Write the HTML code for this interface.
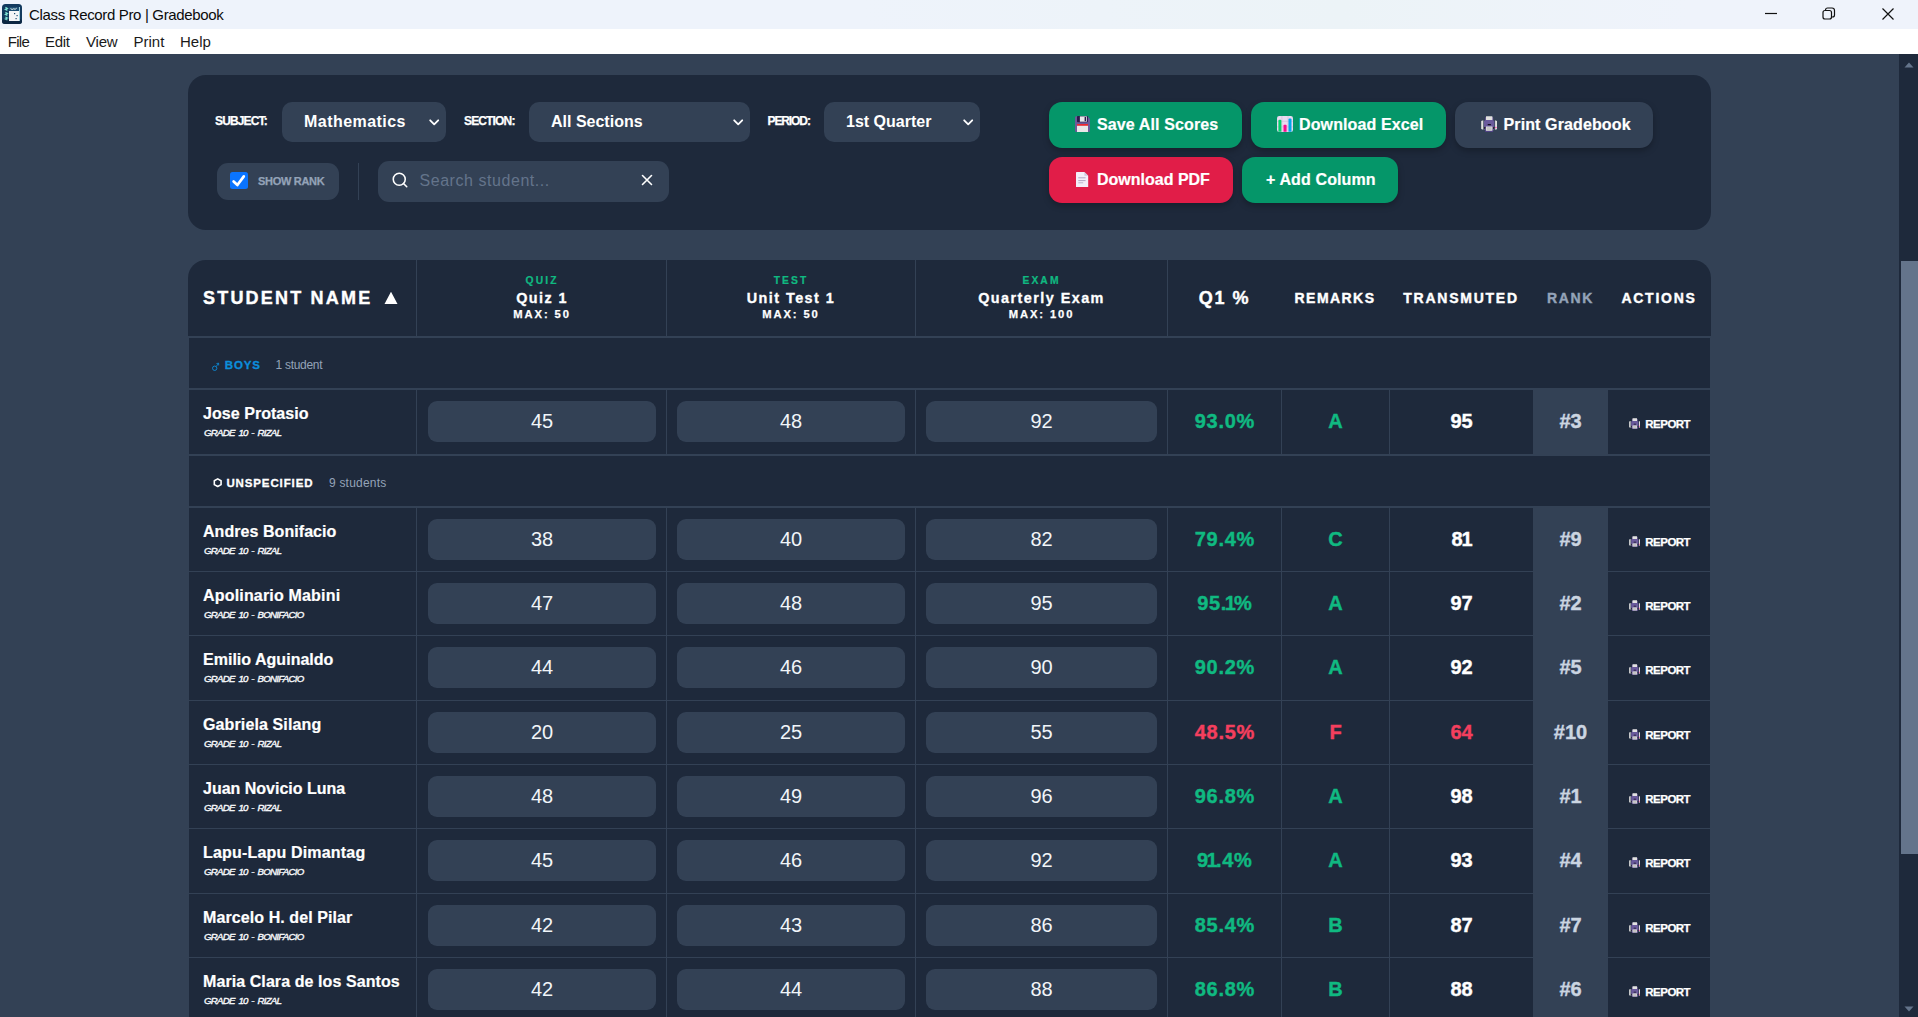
<!DOCTYPE html>
<html lang="en">
<head>
<meta charset="utf-8">
<title>Class Record Pro | Gradebook</title>
<style>
*{box-sizing:border-box;margin:0;padding:0}
html,body{width:1918px;height:1017px;overflow:hidden;background:#334155;font-family:"Liberation Sans",sans-serif;color:#fff}
b{font-weight:bold}i{font-style:normal}
#titlebar{position:absolute;left:0;top:0;width:1918px;height:29px;background:linear-gradient(90deg,#eef3fb 0%,#eef3fb 45%,#ecf3f7 70%,#eff3fb 88%,#eff3fb 100%)}
#titlebar .ttl{position:absolute;left:29px;top:5.5px;font-size:15px;line-height:18px;color:#0b0b0b;white-space:nowrap;letter-spacing:-.34px}
#titlebar svg{position:absolute}
#menubar{position:absolute;left:0;top:29px;width:1918px;height:25px;background:#fff}
#menubar span{position:absolute;top:4px;font-size:15px;line-height:18px;color:#1a1a1a;white-space:nowrap}
#sbar{position:absolute;left:1899px;top:54px;width:19px;height:963px;background:#1e293b}
#sbar .thumb{position:absolute;left:2px;top:207px;width:17px;height:593px;background:#64748b}
#sbar svg{position:absolute;left:5px}
#toolbar{position:absolute;background:#1e293b;left:188px;top:75px;width:1523px;height:155px;border-radius:18px}
.lbl{position:absolute;top:39px;font-weight:bold;font-size:12px;line-height:14px;color:#fff;white-space:nowrap;letter-spacing:-.85px;-webkit-text-stroke:.25px}
.sel{position:absolute;height:40px;top:27px;background:#334155;border-radius:10px}
.sel b{position:absolute;left:22px;top:11px;font-size:16px;white-space:nowrap;line-height:18px}
.sel svg{position:absolute;right:6.500px;top:17px}
.chk{position:absolute;left:29px;top:88px;width:122px;height:37px;border-radius:11px;background:#334155}
.chk .box{position:absolute;left:13.3px;top:9px;width:17.5px;height:17px;border-radius:2.5px;background:#0a74ff}
.chk .box svg{position:absolute;left:0;top:0}
.chk b{position:absolute;left:41px;top:12px;font-size:11px;line-height:13px;color:#94a3b8;letter-spacing:-.3px;white-space:nowrap;-webkit-text-stroke:.25px}
.vdiv{position:absolute;left:170px;top:88px;width:1px;height:37px;background:#334155}
.search{position:absolute;left:190px;top:86px;width:291px;height:41px;border-radius:11px;background:#334155}
.search svg{position:absolute}
.search span{position:absolute;left:41.5px;top:10px;font-size:16px;line-height:20px;color:#64748b;white-space:nowrap;letter-spacing:.55px}
.btn{position:absolute;height:46px;border-radius:13px;box-shadow:0 3px 6px rgba(0,0,0,.25);white-space:nowrap}
.btn b{position:absolute;top:14px;font-size:16px;line-height:18px;letter-spacing:.12px;-webkit-text-stroke:.2px}
.btn svg{position:absolute}
.g{background:#059669}.r{background:#e11d48}.s{background:#334155}
#table{position:absolute;background:#1e293b;left:188px;top:260px;width:1523px;height:780px;border-radius:18px 18px 0 0;overflow:hidden}
.th{position:absolute;top:0;height:76px;text-align:center;white-space:nowrap;font-weight:bold;-webkit-text-stroke:.4px}
.th.v{border-left:1px solid #334155}
.hline{position:absolute;left:0;top:76px;width:1523px;height:2px;background:#334155}
.th .a{position:absolute;left:0;width:100%;top:14.6px;font-size:10.3px;line-height:12px;letter-spacing:2.1px;color:#10b981;-webkit-text-stroke:.22px}
.th .b{position:absolute;left:0;width:100%;top:30.2px;font-size:14.4px;line-height:16px;letter-spacing:1.45px;-webkit-text-stroke:.32px}
.th .m{position:absolute;left:0;width:100%;top:48.3px;font-size:11.2px;line-height:13px;letter-spacing:1.9px;-webkit-text-stroke:.25px}
.th .s1{position:absolute;left:0;width:100%;top:29px;font-size:14px;line-height:18px;letter-spacing:1.6px}
.grp{position:absolute;left:0;width:1523px;height:52px;border-left:1px solid #334155;border-right:1px solid #334155;border-bottom:2px solid #334155}
.grp svg{position:absolute}
.grp b{position:absolute;left:35.8px;top:20px;font-size:11.5px;line-height:14px;letter-spacing:.85px;white-space:nowrap;-webkit-text-stroke:.3px}
.grp i{position:absolute;top:19.5px;font-size:12px;line-height:15px;color:#94a3b8;white-space:nowrap}
.grp.boys b{color:#0c8ddb}
.row{position:absolute;left:0;width:1523px;border-left:1px solid #334155;border-right:1px solid #334155;border-bottom:1px solid #334155}
.c{position:absolute;top:0;bottom:0;border-left:1px solid #334155;text-align:center}
.c.nm{left:0;width:227px;border-left:0;text-align:left}
.c.nm b{position:absolute;left:14px;top:14.8px;font-size:16px;line-height:18px;white-space:nowrap;-webkit-text-stroke:.2px}
.c.nm i{position:absolute;left:15px;top:37px;font-size:9.7px;line-height:11px;font-style:italic;font-weight:normal;white-space:nowrap;color:#f8fafc;letter-spacing:-.72px;word-spacing:1.6px;-webkit-text-stroke:.38px}
.c.q{left:227px;width:250px}.c.u{left:477px;width:249px}.c.e{left:726px;width:252px}
.c.u .inp,.c.e .inp{left:10px}
.inp{position:absolute;left:11px;right:10px;top:11px;height:41px;border-radius:9px;background:#334155;font-size:20px;line-height:41px;color:#f1f5f9}
.c.p{left:978px;width:114px}.c.rm{left:1092px;width:108px}.c.tr{left:1200px;width:144px}
.c.rk{left:1344px;width:75px;background:#334155;border-left:0}.c.ac{left:1419px;width:102px;border-left:0}
.c.p b,.c.rm b,.c.tr b,.c.rk b{position:absolute;left:0;width:100%;top:19.7px;font-size:20px;line-height:22px;-webkit-text-stroke:.4px}
.c.p u{text-decoration:none;margin:0 -2.4px}.c.tr u{text-decoration:none;margin:0 -1px}
.c.p b{letter-spacing:.7px;text-indent:.7px}
.c.p b,.c.rm b{color:#10b981}
.c.rk b{color:#cbd5e1}
.c.bad b{color:#f43f5e}
.c.ac svg{position:absolute;left:20.800px;top:27.800px}
.c.ac b{position:absolute;left:37.3px;top:26.8px;font-size:11.5px;line-height:14px;letter-spacing:-.52px;-webkit-text-stroke:.25px}
.grp.unsp b{left:37.4px;letter-spacing:.88px}
</style>
</head>
<body>
<div id="titlebar">
  <svg style="left:2px;top:4px" width="20" height="20" viewBox="0 0 20 20"><rect x="0" y="0" width="20" height="20" rx="3.5" fill="#123a5e"/><rect x="0" y="15" width="20" height="5" rx="3" fill="#0c2743"/><rect x="7" y="3" width="10" height="14" fill="#f4f6f7"/><rect x="7" y="3" width="10" height="4" fill="#1d4f73"/><path d="M8.5 4.6 q1.6 1.6 3.2 0.2 q1.4 1.2 3 -0.6" stroke="#e8f6f4" stroke-width="1" fill="none"/><path d="M3.4 3.4 l2 1 l-2 1 l2 1 M3.4 8.4 l2 1 l-2 1 l2 1 M3.4 13 l2 1 l-2 1 l2 1" stroke="#7fe3d4" stroke-width="1.2" fill="none"/><rect x="12" y="9" width="1.2" height="1.2" fill="#1d4f73"/><rect x="14.5" y="11" width="1.2" height="1.2" fill="#1d4f73"/><rect x="13.5" y="14" width="1.2" height="1.2" fill="#1d4f73"/><rect x="17" y="3" width="1" height="14" fill="#9fd3e0"/></svg>
  <span class="ttl">Class Record Pro | Gradebook</span>
  <svg style="left:1760px;top:0" width="150" height="29" viewBox="0 0 150 29" fill="none" stroke="#111" stroke-width="1.2"><path d="M5 13.5 H17"/><rect x="63" y="10.5" width="8.5" height="8.5" rx="2"/><path d="M65.5 10.5 V10 a2 2 0 0 1 2 -2 H72 a2.5 2.5 0 0 1 2.500 2.500 V15 a2 2 0 0 1 -2 2 H71.500"/><path d="M122.500 8.500 L133.500 19.500 M133.500 8.500 L122.500 19.500"/></svg>
</div>
<div id="menubar">
  <span style="left:7.7px;letter-spacing:-.7px">File</span><span style="left:45px;letter-spacing:-.3px">Edit</span><span style="left:86px;letter-spacing:-.2px">View</span><span style="left:133.5px">Print</span><span style="left:180px">Help</span>
</div>
<div id="sbar"><div class="thumb"></div>
  <svg style="top:8.300px;left:5.300px" width="10" height="6" viewBox="0 0 10 6"><path d="M0.500 5.500 L5 0.500 L9.500 5.500 Z" fill="#64748b"/></svg>
  <svg style="top:952px" width="10" height="6" viewBox="0 0 10 6"><path d="M0.500 0.500 L5 5.500 L9.500 0.500 Z" fill="#64748b"/></svg>
</div>

<div id="toolbar">
  <span class="lbl" style="left:27px">SUBJECT:</span>
  <div class="sel" style="left:94px;width:164px"><b style="letter-spacing:.45px">Mathematics</b><svg width="10.400" height="6.600" viewBox="0 0 10.400 6.600"><path d="M1.200 1.300 L5.200 5.300 L9.200 1.300" fill="none" stroke="#fff" stroke-width="1.800" stroke-linecap="round" stroke-linejoin="round"/></svg></div>
  <span class="lbl" style="left:276px">SECTION:</span>
  <div class="sel" style="left:341px;width:221px"><b>All Sections</b><svg width="10.400" height="6.600" viewBox="0 0 10.400 6.600"><path d="M1.200 1.300 L5.200 5.300 L9.200 1.300" fill="none" stroke="#fff" stroke-width="1.800" stroke-linecap="round" stroke-linejoin="round"/></svg></div>
  <span class="lbl" style="left:579.500px;letter-spacing:-1.100px">PERIOD:</span>
  <div class="sel" style="left:636px;width:156px"><b>1st Quarter</b><svg width="10.400" height="6.600" viewBox="0 0 10.400 6.600"><path d="M1.200 1.300 L5.200 5.300 L9.200 1.300" fill="none" stroke="#fff" stroke-width="1.800" stroke-linecap="round" stroke-linejoin="round"/></svg></div>

  <div class="chk"><span class="box"><svg width="18" height="18" viewBox="0 0 18 18"><path d="M3.6 9.4 L7.4 13 L13.8 4.400" fill="none" stroke="#fff" stroke-width="2.700" stroke-linecap="round" stroke-linejoin="round"/></svg></span><b>SHOW RANK</b></div>
  <div class="vdiv"></div>
  <div class="search">
    <svg style="left:13.25px;top:10.25px" width="18" height="18" viewBox="0 0 24 24" fill="none" stroke="#fff" stroke-width="2.1" stroke-linecap="round"><circle cx="11" cy="11" r="8"/><path d="M21 21 L16.65 16.65"/></svg>
    <span>Search student...</span>
    <svg style="left:263px;top:13.200px" width="12" height="12" viewBox="0 0 12 12" fill="none" stroke="#fff" stroke-width="1.600" stroke-linecap="round"><path d="M1.500 1.500 L10.500 10.500 M10.500 1.500 L1.500 10.500"/></svg>
  </div>

  <div class="btn g" style="left:861px;top:27px;width:193px">
    <svg style="left:26px;top:14.2px" width="15" height="16" viewBox="0 0 15 16"><path d="M0 1.500 Q0 0.300 1.200 0.300 L12.600 0.300 L15 2.700 L15 14.800 Q15 16 13.800 16 L1.200 16 Q0 16 0 14.800 Z" fill="#6b5b9a"/><rect x="2" y="0" width="10.900" height="6.300" rx=".8" fill="#2b1a4a"/><rect x="4.900" y=".4" width="7" height="5.300" fill="#e8e8ea"/><rect x="9.600" y="1" width="1.500" height="4.200" fill="#2b1a4a"/><rect x="2" y="8" width="11" height="1.900" fill="#f0262d"/><rect x="2" y="9.800" width="11" height="6.200" fill="#e8e8e8"/></svg>
    <b style="left:48px">Save All Scores</b></div>
  <div class="btn g" style="left:1063px;top:27px;width:195px">
    <svg style="left:25.500px;top:14.300px" width="16" height="16" viewBox="0 0 16 16"><rect x="0" y="0" width="16" height="16" rx="2.200" fill="#e8daf0"/><path d="M0 5.300 H16 M0 10.900 H16 M4.900 0 V16 M11 0 V16" stroke="#c9b8d6" stroke-width="0.600"/><path d="M1.400 15.700 V4.800 a1 1 0 0 1 1 -1 h1 a1 1 0 0 1 1 1 V15.700 Z" fill="#00d26a"/><path d="M6.500 15.700 V9.500 a.8 .8 0 0 1 .8 -.8 h1.500 a.8 .8 0 0 1 .8 .8 V15.700 Z" fill="#f70a8d"/><path d="M11.500 15.700 V3.400 a1 1 0 0 1 1 -1 h1 a1 1 0 0 1 1 1 V15.700 Z" fill="#00a6ed"/></svg>
    <b style="left:48px">Download Excel</b></div>
  <div class="btn s" style="left:1267px;top:27px;width:198px">
    <span style="position:absolute;left:25.800px;top:14px;width:16.400px;height:16px"><svg class="prn" viewBox="0 0 16.4 16" width="16.4" height="16"><rect x="4.2" y="1" width="8" height="14.7" rx="1" fill="#6a5a9c"/><rect x="3" y="4.4" width="10.4" height="9.4" rx=".6" fill="#6a5a9c"/><rect x="4.4" y="13.7" width="7.6" height="2" fill="#4d3c85"/><rect x="5" y="0.2" width="6.4" height="3.9" rx=".4" fill="#e2e2e0"/><path d="M0.200 5 L2.300 4.300 L2.300 13.800 L0.200 13.100 Z M16.200 5 L14.100 4.300 L14.100 13.800 L16.200 13.100 Z" fill="#e0e0de"/><rect x="6.6" y="8" width="3.4" height="1.3" rx=".6" fill="#15101f"/><rect x="5" y="10.5" width="6.400" height="4.300" fill="#dcdcda"/><rect x="5.800" y="11.100" width="4.800" height="3.300" fill="#c4c4c4"/><rect x="3.300" y="10.800" width=".9" height="2.300" rx=".45" fill="#111"/><rect x="12.200" y="10.800" width=".9" height="2.300" rx=".45" fill="#111"/><circle cx="14.900" cy="11.500" r=".75" fill="#ff3fa4"/></svg></span>
    <b style="left:48.500px">Print Gradebook</b></div>
  <div class="btn r" style="left:861px;top:82px;width:184px">
    <svg style="left:27.400px;top:14.800px" width="12.200" height="15.400" viewBox="0 0 12.200 15.400"><path d="M0.600 0 H8.400 L12.200 3.800 V14.800 Q12.200 15.400 11.600 15.400 H0.600 Q0 15.400 0 14.800 V0.600 Q0 0 0.600 0 Z" fill="#f3eef8"/><path d="M8.400 0 V3.200 Q8.400 3.800 9 3.800 H12.200 Z" fill="#cfc6dc"/><path d="M2.300 5.800 H9.600 M2.300 8.600 H9.600" stroke="#b0a6c2" stroke-width="1"/><path d="M2.300 10.800 H7.200" stroke="#b0a6c2" stroke-width=".8"/></svg>
    <b style="left:48px;letter-spacing:0">Download PDF</b></div>
  <div class="btn g" style="left:1054px;top:82px;width:156px"><b style="left:24px">+ Add Column</b></div>
</div>
<div id="table">
<div class="th" style="left:0;width:228px;text-align:left"><span style="position:absolute;left:15px;top:27px;font-size:18px;line-height:22px;letter-spacing:2.2px">STUDENT NAME</span><svg style="position:absolute;left:196px;top:31px" width="14" height="14" viewBox="0 0 14 14"><path d="M0.500 13 L7 0.800 L13.500 13 Z" fill="#fff"/></svg></div>
<div class="th v" style="left:228px;width:250px;text-indent:1.200px"><span class="a">QUIZ</span><span class="b">Quiz 1</span><span class="m">MAX: 50</span></div>
<div class="th v" style="left:478px;width:249px"><span class="a">TEST</span><span class="b">Unit Test 1</span><span class="m">MAX: 50</span></div>
<div class="th v" style="left:727px;width:252px"><span class="a">EXAM</span><span class="b">Quarterly Exam</span><span class="m">MAX: 100</span></div>
<div class="th v" style="left:979px;width:114px"><span class="s1" style="font-size:18px;top:27px;line-height:22px">Q1 %</span></div>
<div class="th" style="left:1093px;width:108px"><span class="s1" style="letter-spacing:1.450px">REMARKS</span></div>
<div class="th" style="left:1201px;width:144px"><span class="s1" style="letter-spacing:1.750px">TRANSMUTED</span></div>
<div class="th" style="left:1345px;width:75px"><span class="s1" style="color:#94a3b8">RANK</span></div>
<div class="th" style="left:1420px;width:102px"><span class="s1" style="letter-spacing:1.750px">ACTIONS</span></div>
<div class="hline"></div>
<div class="grp boys" style="top:78px"><svg class="gi" viewBox="0 0 10 12" width="7.5" height="9.5" style="left:23.3px;top:24px"><circle cx="3.6" cy="8" r="2.9" fill="none" stroke="#0c8ddb" stroke-width="1.2"/><path d="M5.5 5.8 L8.6 1.6 M5.9 1.8 L8.8 1.2 L8.9 4.2" fill="none" stroke="#0c8ddb" stroke-width="1.1"/></svg><b>BOYS</b><i style="left:86.6px;letter-spacing:-0.3px">1 student</i></div>
<div class="grp unsp" style="top:196px"><svg class="gi" viewBox="0 0 10 10" width="9.4" height="9.4" style="left:23.6px;top:22.4px"><path d="M5 0.9 L8.6 2.9 L8.6 7.1 L5 9.1 L1.4 7.1 L1.4 2.9 Z" fill="none" stroke="#fff" stroke-width="1.7" stroke-linejoin="round"/></svg><b>UNSPECIFIED</b><i style="left:140px;letter-spacing:0.2px">9 students</i></div>
<div class="row" style="top:130px;height:66px;border-bottom-width:2px"><div class="c nm"><b style="letter-spacing:0.05px">Jose Protasio</b><i>GRADE 10 - RIZAL</i></div><div class="c q"><span class="inp">45</span></div><div class="c u"><span class="inp">48</span></div><div class="c e"><span class="inp">92</span></div><div class="c p"><b>93.0%</b></div><div class="c rm"><b>A</b></div><div class="c tr"><b>95</b></div><div class="c rk"><b>#3</b></div><div class="c ac"><svg class="prn" viewBox="0 0 16.4 16" width="11.6" height="11.4"><rect x="4.2" y="1" width="8" height="14.7" rx="1" fill="#6a5a9c"/><rect x="3" y="4.4" width="10.4" height="9.4" rx=".6" fill="#6a5a9c"/><rect x="4.4" y="13.7" width="7.6" height="2" fill="#4d3c85"/><rect x="5" y="0.2" width="6.4" height="3.9" rx=".4" fill="#e2e2e0"/><path d="M0.200 5 L2.300 4.300 L2.300 13.800 L0.200 13.100 Z M16.200 5 L14.100 4.300 L14.100 13.800 L16.200 13.100 Z" fill="#e0e0de"/><rect x="6.6" y="8" width="3.4" height="1.3" rx=".6" fill="#15101f"/><rect x="5" y="10.5" width="6.400" height="4.300" fill="#dcdcda"/><rect x="5.800" y="11.100" width="4.800" height="3.300" fill="#c4c4c4"/><rect x="3.300" y="10.800" width=".9" height="2.300" rx=".45" fill="#111"/><rect x="12.200" y="10.800" width=".9" height="2.300" rx=".45" fill="#111"/><circle cx="14.900" cy="11.500" r=".75" fill="#ff3fa4"/></svg><b>REPORT</b></div></div>
<div class="row" style="top:248px;height:64px"><div class="c nm"><b style="letter-spacing:0.06px">Andres Bonifacio</b><i>GRADE 10 - RIZAL</i></div><div class="c q"><span class="inp">38</span></div><div class="c u"><span class="inp">40</span></div><div class="c e"><span class="inp">82</span></div><div class="c p"><b>79.4%</b></div><div class="c rm"><b>C</b></div><div class="c tr"><b>8<u>1</u></b></div><div class="c rk"><b>#9</b></div><div class="c ac"><svg class="prn" viewBox="0 0 16.4 16" width="11.6" height="11.4"><rect x="4.2" y="1" width="8" height="14.7" rx="1" fill="#6a5a9c"/><rect x="3" y="4.4" width="10.4" height="9.4" rx=".6" fill="#6a5a9c"/><rect x="4.4" y="13.7" width="7.6" height="2" fill="#4d3c85"/><rect x="5" y="0.2" width="6.4" height="3.9" rx=".4" fill="#e2e2e0"/><path d="M0.200 5 L2.300 4.300 L2.300 13.800 L0.200 13.100 Z M16.200 5 L14.100 4.300 L14.100 13.800 L16.200 13.100 Z" fill="#e0e0de"/><rect x="6.6" y="8" width="3.4" height="1.3" rx=".6" fill="#15101f"/><rect x="5" y="10.5" width="6.400" height="4.300" fill="#dcdcda"/><rect x="5.800" y="11.100" width="4.800" height="3.300" fill="#c4c4c4"/><rect x="3.300" y="10.800" width=".9" height="2.300" rx=".45" fill="#111"/><rect x="12.200" y="10.800" width=".9" height="2.300" rx=".45" fill="#111"/><circle cx="14.900" cy="11.500" r=".75" fill="#ff3fa4"/></svg><b>REPORT</b></div></div>
<div class="row" style="top:312px;height:64px"><div class="c nm"><b style="letter-spacing:0.18px">Apolinario Mabini</b><i>GRADE 10 - BONIFACIO</i></div><div class="c q"><span class="inp">47</span></div><div class="c u"><span class="inp">48</span></div><div class="c e"><span class="inp">95</span></div><div class="c p"><b>95.<u>1</u>%</b></div><div class="c rm"><b>A</b></div><div class="c tr"><b>97</b></div><div class="c rk"><b>#2</b></div><div class="c ac"><svg class="prn" viewBox="0 0 16.4 16" width="11.6" height="11.4"><rect x="4.2" y="1" width="8" height="14.7" rx="1" fill="#6a5a9c"/><rect x="3" y="4.4" width="10.4" height="9.4" rx=".6" fill="#6a5a9c"/><rect x="4.4" y="13.7" width="7.6" height="2" fill="#4d3c85"/><rect x="5" y="0.2" width="6.4" height="3.9" rx=".4" fill="#e2e2e0"/><path d="M0.200 5 L2.300 4.300 L2.300 13.800 L0.200 13.100 Z M16.200 5 L14.100 4.300 L14.100 13.800 L16.200 13.100 Z" fill="#e0e0de"/><rect x="6.6" y="8" width="3.4" height="1.3" rx=".6" fill="#15101f"/><rect x="5" y="10.5" width="6.400" height="4.300" fill="#dcdcda"/><rect x="5.800" y="11.100" width="4.800" height="3.300" fill="#c4c4c4"/><rect x="3.300" y="10.800" width=".9" height="2.300" rx=".45" fill="#111"/><rect x="12.200" y="10.800" width=".9" height="2.300" rx=".45" fill="#111"/><circle cx="14.900" cy="11.500" r=".75" fill="#ff3fa4"/></svg><b>REPORT</b></div></div>
<div class="row" style="top:376px;height:65px"><div class="c nm"><b style="letter-spacing:0.02px">Emilio Aguinaldo</b><i>GRADE 10 - BONIFACIO</i></div><div class="c q"><span class="inp">44</span></div><div class="c u"><span class="inp">46</span></div><div class="c e"><span class="inp">90</span></div><div class="c p"><b>90.2%</b></div><div class="c rm"><b>A</b></div><div class="c tr"><b>92</b></div><div class="c rk"><b>#5</b></div><div class="c ac"><svg class="prn" viewBox="0 0 16.4 16" width="11.6" height="11.4"><rect x="4.2" y="1" width="8" height="14.7" rx="1" fill="#6a5a9c"/><rect x="3" y="4.4" width="10.4" height="9.4" rx=".6" fill="#6a5a9c"/><rect x="4.4" y="13.7" width="7.6" height="2" fill="#4d3c85"/><rect x="5" y="0.2" width="6.4" height="3.9" rx=".4" fill="#e2e2e0"/><path d="M0.200 5 L2.300 4.300 L2.300 13.800 L0.200 13.100 Z M16.200 5 L14.100 4.300 L14.100 13.800 L16.200 13.100 Z" fill="#e0e0de"/><rect x="6.6" y="8" width="3.4" height="1.3" rx=".6" fill="#15101f"/><rect x="5" y="10.5" width="6.400" height="4.300" fill="#dcdcda"/><rect x="5.800" y="11.100" width="4.800" height="3.300" fill="#c4c4c4"/><rect x="3.300" y="10.800" width=".9" height="2.300" rx=".45" fill="#111"/><rect x="12.200" y="10.800" width=".9" height="2.300" rx=".45" fill="#111"/><circle cx="14.900" cy="11.500" r=".75" fill="#ff3fa4"/></svg><b>REPORT</b></div></div>
<div class="row" style="top:441px;height:64px"><div class="c nm"><b style="letter-spacing:0.12px">Gabriela Silang</b><i>GRADE 10 - RIZAL</i></div><div class="c q"><span class="inp">20</span></div><div class="c u"><span class="inp">25</span></div><div class="c e"><span class="inp">55</span></div><div class="c p bad"><b>48.5%</b></div><div class="c rm bad"><b>F</b></div><div class="c tr bad"><b>64</b></div><div class="c rk"><b>#10</b></div><div class="c ac"><svg class="prn" viewBox="0 0 16.4 16" width="11.6" height="11.4"><rect x="4.2" y="1" width="8" height="14.7" rx="1" fill="#6a5a9c"/><rect x="3" y="4.4" width="10.4" height="9.4" rx=".6" fill="#6a5a9c"/><rect x="4.4" y="13.7" width="7.6" height="2" fill="#4d3c85"/><rect x="5" y="0.2" width="6.4" height="3.9" rx=".4" fill="#e2e2e0"/><path d="M0.200 5 L2.300 4.300 L2.300 13.800 L0.200 13.100 Z M16.200 5 L14.100 4.300 L14.100 13.800 L16.200 13.100 Z" fill="#e0e0de"/><rect x="6.6" y="8" width="3.4" height="1.3" rx=".6" fill="#15101f"/><rect x="5" y="10.5" width="6.400" height="4.300" fill="#dcdcda"/><rect x="5.800" y="11.100" width="4.800" height="3.300" fill="#c4c4c4"/><rect x="3.300" y="10.800" width=".9" height="2.300" rx=".45" fill="#111"/><rect x="12.200" y="10.800" width=".9" height="2.300" rx=".45" fill="#111"/><circle cx="14.900" cy="11.500" r=".75" fill="#ff3fa4"/></svg><b>REPORT</b></div></div>
<div class="row" style="top:505px;height:64px"><div class="c nm"><b style="letter-spacing:0px">Juan Novicio Luna</b><i>GRADE 10 - RIZAL</i></div><div class="c q"><span class="inp">48</span></div><div class="c u"><span class="inp">49</span></div><div class="c e"><span class="inp">96</span></div><div class="c p"><b>96.8%</b></div><div class="c rm"><b>A</b></div><div class="c tr"><b>98</b></div><div class="c rk"><b>#1</b></div><div class="c ac"><svg class="prn" viewBox="0 0 16.4 16" width="11.6" height="11.4"><rect x="4.2" y="1" width="8" height="14.7" rx="1" fill="#6a5a9c"/><rect x="3" y="4.4" width="10.4" height="9.4" rx=".6" fill="#6a5a9c"/><rect x="4.4" y="13.7" width="7.6" height="2" fill="#4d3c85"/><rect x="5" y="0.2" width="6.4" height="3.9" rx=".4" fill="#e2e2e0"/><path d="M0.200 5 L2.300 4.300 L2.300 13.800 L0.200 13.100 Z M16.200 5 L14.100 4.300 L14.100 13.800 L16.200 13.100 Z" fill="#e0e0de"/><rect x="6.6" y="8" width="3.4" height="1.3" rx=".6" fill="#15101f"/><rect x="5" y="10.5" width="6.400" height="4.300" fill="#dcdcda"/><rect x="5.800" y="11.100" width="4.800" height="3.300" fill="#c4c4c4"/><rect x="3.300" y="10.800" width=".9" height="2.300" rx=".45" fill="#111"/><rect x="12.200" y="10.800" width=".9" height="2.300" rx=".45" fill="#111"/><circle cx="14.900" cy="11.500" r=".75" fill="#ff3fa4"/></svg><b>REPORT</b></div></div>
<div class="row" style="top:569px;height:65px"><div class="c nm"><b style="letter-spacing:0.18px">Lapu-Lapu Dimantag</b><i>GRADE 10 - BONIFACIO</i></div><div class="c q"><span class="inp">45</span></div><div class="c u"><span class="inp">46</span></div><div class="c e"><span class="inp">92</span></div><div class="c p"><b>9<u>1</u>.4%</b></div><div class="c rm"><b>A</b></div><div class="c tr"><b>93</b></div><div class="c rk"><b>#4</b></div><div class="c ac"><svg class="prn" viewBox="0 0 16.4 16" width="11.6" height="11.4"><rect x="4.2" y="1" width="8" height="14.7" rx="1" fill="#6a5a9c"/><rect x="3" y="4.4" width="10.4" height="9.4" rx=".6" fill="#6a5a9c"/><rect x="4.4" y="13.7" width="7.6" height="2" fill="#4d3c85"/><rect x="5" y="0.2" width="6.4" height="3.9" rx=".4" fill="#e2e2e0"/><path d="M0.200 5 L2.300 4.300 L2.300 13.800 L0.200 13.100 Z M16.200 5 L14.100 4.300 L14.100 13.800 L16.200 13.100 Z" fill="#e0e0de"/><rect x="6.6" y="8" width="3.4" height="1.3" rx=".6" fill="#15101f"/><rect x="5" y="10.5" width="6.400" height="4.300" fill="#dcdcda"/><rect x="5.800" y="11.100" width="4.800" height="3.300" fill="#c4c4c4"/><rect x="3.300" y="10.800" width=".9" height="2.300" rx=".45" fill="#111"/><rect x="12.200" y="10.800" width=".9" height="2.300" rx=".45" fill="#111"/><circle cx="14.900" cy="11.500" r=".75" fill="#ff3fa4"/></svg><b>REPORT</b></div></div>
<div class="row" style="top:634px;height:64px"><div class="c nm"><b style="letter-spacing:0.09px">Marcelo H. del Pilar</b><i>GRADE 10 - BONIFACIO</i></div><div class="c q"><span class="inp">42</span></div><div class="c u"><span class="inp">43</span></div><div class="c e"><span class="inp">86</span></div><div class="c p"><b>85.4%</b></div><div class="c rm"><b>B</b></div><div class="c tr"><b>87</b></div><div class="c rk"><b>#7</b></div><div class="c ac"><svg class="prn" viewBox="0 0 16.4 16" width="11.6" height="11.4"><rect x="4.2" y="1" width="8" height="14.7" rx="1" fill="#6a5a9c"/><rect x="3" y="4.4" width="10.4" height="9.4" rx=".6" fill="#6a5a9c"/><rect x="4.4" y="13.7" width="7.6" height="2" fill="#4d3c85"/><rect x="5" y="0.2" width="6.4" height="3.9" rx=".4" fill="#e2e2e0"/><path d="M0.200 5 L2.300 4.300 L2.300 13.800 L0.200 13.100 Z M16.200 5 L14.100 4.300 L14.100 13.800 L16.200 13.100 Z" fill="#e0e0de"/><rect x="6.6" y="8" width="3.4" height="1.3" rx=".6" fill="#15101f"/><rect x="5" y="10.5" width="6.400" height="4.300" fill="#dcdcda"/><rect x="5.800" y="11.100" width="4.800" height="3.300" fill="#c4c4c4"/><rect x="3.300" y="10.800" width=".9" height="2.300" rx=".45" fill="#111"/><rect x="12.200" y="10.800" width=".9" height="2.300" rx=".45" fill="#111"/><circle cx="14.900" cy="11.500" r=".75" fill="#ff3fa4"/></svg><b>REPORT</b></div></div>
<div class="row" style="top:698px;height:64px"><div class="c nm"><b style="letter-spacing:0.08px">Maria Clara de los Santos</b><i>GRADE 10 - RIZAL</i></div><div class="c q"><span class="inp">42</span></div><div class="c u"><span class="inp">44</span></div><div class="c e"><span class="inp">88</span></div><div class="c p"><b>86.8%</b></div><div class="c rm"><b>B</b></div><div class="c tr"><b>88</b></div><div class="c rk"><b>#6</b></div><div class="c ac"><svg class="prn" viewBox="0 0 16.4 16" width="11.6" height="11.4"><rect x="4.2" y="1" width="8" height="14.7" rx="1" fill="#6a5a9c"/><rect x="3" y="4.4" width="10.4" height="9.4" rx=".6" fill="#6a5a9c"/><rect x="4.4" y="13.7" width="7.6" height="2" fill="#4d3c85"/><rect x="5" y="0.2" width="6.4" height="3.9" rx=".4" fill="#e2e2e0"/><path d="M0.200 5 L2.300 4.300 L2.300 13.800 L0.200 13.100 Z M16.200 5 L14.100 4.300 L14.100 13.800 L16.200 13.100 Z" fill="#e0e0de"/><rect x="6.6" y="8" width="3.4" height="1.3" rx=".6" fill="#15101f"/><rect x="5" y="10.5" width="6.400" height="4.300" fill="#dcdcda"/><rect x="5.800" y="11.100" width="4.800" height="3.300" fill="#c4c4c4"/><rect x="3.300" y="10.800" width=".9" height="2.300" rx=".45" fill="#111"/><rect x="12.200" y="10.800" width=".9" height="2.300" rx=".45" fill="#111"/><circle cx="14.900" cy="11.500" r=".75" fill="#ff3fa4"/></svg><b>REPORT</b></div></div>
</div>
</body>
</html>
